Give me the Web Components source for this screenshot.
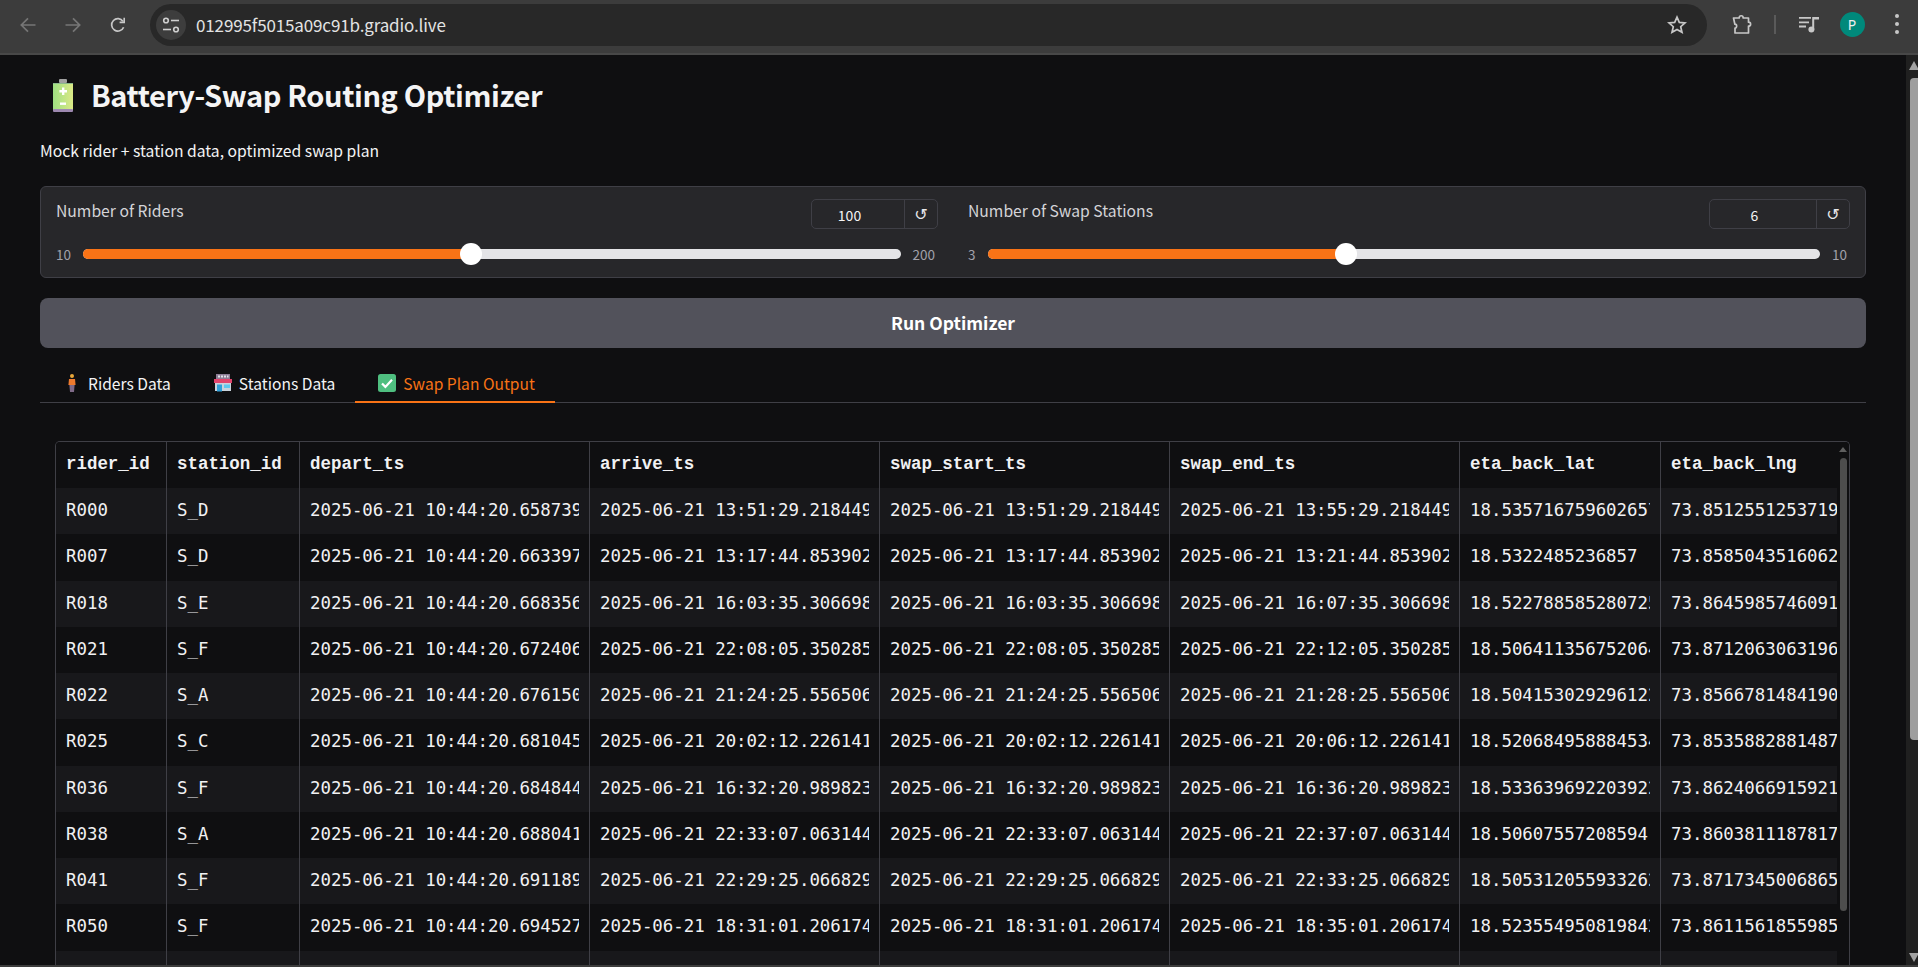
<!DOCTYPE html>
<html lang="en">
<head>
<meta charset="utf-8">
<title>Battery-Swap Routing Optimizer</title>
<style>
html,body{margin:0;height:100%;background:#0f0f11;overflow:hidden}
body{display:flex;flex-direction:column;height:967px;font-family:"Noto Sans CJK JP","Noto Sans",sans-serif;color:#f4f4f5}
</style>
</head>
<body>
<browser-bar url="012995f5015a09c91b.gradio.live" avatar="P"></browser-bar>
<app-viewport>
  <app-heading>Battery-Swap Routing Optimizer</app-heading>
  <app-subtitle>Mock rider + station data, optimized swap plan</app-subtitle>
  <slider-panel>
    <slider-field label="Number of Riders" min="10" max="200" value="100" pct="47.4"></slider-field>
    <slider-field label="Number of Swap Stations" min="3" max="10" value="6" pct="43.03" second></slider-field>
  </slider-panel>
  <run-button>Run Optimizer</run-button>
  <tab-bar></tab-bar>
  <data-table></data-table>
</app-viewport>
<window-edge></window-edge>
<script>
function define(name, css, html, init){
  customElements.define(name, class extends HTMLElement{
    constructor(){super();this.attachShadow({mode:'open'});}
    connectedCallback(){
      if(this.shadowRoot.childElementCount) return;
      const a=k=>this.getAttribute(k);
      this.shadowRoot.innerHTML='<style>'+css+'</style>'+(typeof html==='function'?html(a,this):html);
      if(init) init(this.shadowRoot,a,this);
    }
  });
}

define('browser-bar',`
:host{display:flex;flex:none;height:53px;background:#3c3c3c;border-bottom:2px solid #484848;align-items:center;box-sizing:content-box;position:relative}
svg{display:block;flex:none}
.nav{display:flex;align-items:center;padding:0 0 0 0;margin-top:-3px}
.b{width:45px;display:flex;justify-content:center}
.omni{margin-left:10px;width:1557px;height:42px;margin-top:-3px;border-radius:21px;background:#282828;display:flex;align-items:center;box-sizing:border-box;padding-left:6px}
.tune{width:30px;height:30px;border-radius:50%;background:#3d3d3d;display:flex;align-items:center;justify-content:center;flex:none}
.url{margin-left:10px;font:17px/20px "Noto Sans CJK JP","Noto Sans",sans-serif;color:#e3e3e3;flex:1;letter-spacing:-.14px}
.star{margin-right:20px}
.tools{display:flex;align-items:center;margin-top:-5px}
.ext{margin-left:25px}
.sep{width:2px;height:19px;background:#5a5a5a;margin-left:21px}
.media{margin-left:23px}
.av{width:25px;height:25px;border-radius:50%;background:#00897b;color:#f0f0f0;display:flex;align-items:center;justify-content:center;font:14px/25px "Noto Sans",sans-serif;margin-left:20.5px}
.dots{margin-left:29.5px}
`,(a)=>`
<div class="nav" style="padding-left:5px">
 <div class="b"><svg width="16" height="16" viewBox="0 0 16 16" fill="none" stroke="#767676" stroke-width="1.7"><path d="M15.5 8H1.6M8 1.3 1.3 8 8 14.7"/></svg></div>
 <div class="b"><svg width="16" height="16" viewBox="0 0 16 16" fill="none" stroke="#767676" stroke-width="1.7"><path d="M.5 8h13.9M8 1.3 14.7 8 8 14.7"/></svg></div>
 <div class="b"><svg width="16" height="16" viewBox="0 0 16 16" fill="none" stroke="#c7c7c7" stroke-width="1.7"><path d="M13.6 10.2A6.2 6.2 0 1 1 13 4.4"/><path d="M14.2 .8v4.6H9.6" stroke-width="1.6"/></svg></div>
</div>
<div class="omni">
 <div class="tune"><svg width="18" height="16" viewBox="0 0 18 16" fill="none" stroke="#d0d0d0" stroke-width="1.6"><circle cx="4" cy="3.5" r="2.3"/><path d="M9 3.5h8"/><circle cx="14" cy="12.5" r="2.3"/><path d="M1 12.5h8"/></svg></div>
 <div class="url">${a('url')}</div>
 <svg class="star" width="20" height="20" viewBox="0 0 20 20" fill="none" stroke="#c7c7c7" stroke-width="1.7" stroke-linejoin="miter"><path d="M10 2.2l2.3 5.2 5.7.5-4.3 3.8 1.3 5.6L10 14.4l-5 2.9 1.3-5.6L2 7.9l5.7-.5z"/></svg>
</div>
<div class="tools">
 <svg class="ext" width="21" height="20" viewBox="0 0 21 20" fill="none" stroke="#c7c7c7" stroke-width="1.7" stroke-linejoin="round"><path d="M1.5 4h5.7c0-3 4-3 4 0h5.3v4.2c2.8 0 2.8 3.9 0 3.9v6.9H3v-5c2.2 0 2.2-3.8-.1-3.8z"/></svg>
 <div class="sep"></div>
 <svg class="media" width="20" height="17" viewBox="0 0 20 17" fill="#c7c7c7"><path d="M0 1h12v1.8H0zM0 5.4h10v1.8H0zM0 9.6h7v1.8H0z"/><path d="M13.2 1H20v2.4h-4.8v10h-2z"/><circle cx="12.4" cy="13.4" r="3"/></svg>
 <div class="av">${a('avatar')}</div>
 <svg class="dots" width="6" height="22" viewBox="0 0 6 22" fill="#c7c7c7"><circle cx="3" cy="3" r="2"/><circle cx="3" cy="11" r="2"/><circle cx="3" cy="19" r="2"/></svg>
</div>`);

define('app-viewport',`
:host{display:flex;flex:1;min-height:0;overflow:hidden}
main{flex:1;min-width:0;padding:24px 40px 0;box-sizing:border-box;overflow:hidden}
`,`<main><slot></slot></main><page-scrollbar></page-scrollbar>`);

define('page-scrollbar',`
:host{display:flex;flex:none;flex-direction:column;align-items:flex-end;width:12px;background:#202020}
.up,.dn{width:0;height:0;border-left:5px solid transparent;border-right:5px solid transparent;margin-right:-1px}
.up{border-bottom:9px solid #a3a3a3;margin-top:6px}
.thumb{width:8px;height:662px;background:#9e9e9e;border-radius:4px 0 0 4px;margin-top:8px}
.sp{flex:1}
.dn{border-top:9px solid #a3a3a3;margin-bottom:3px}
`,`<div class="up"></div><div class="thumb"></div><div class="sp"></div><div class="dn"></div>`);

define('window-edge',`:host{display:block;flex:none;height:2px;background:#3c3c3c}`,``);

define('app-heading',`
:host{display:flex;align-items:center;height:33px;gap:18px;padding-left:13px;font-size:29px;font-weight:600;line-height:31px;color:#f4f4f5;letter-spacing:-.38px}
svg{display:block;flex:none}
span{display:block;padding-bottom:2px}
`,`<svg width="20" height="33" viewBox="0 0 20 33"><defs><linearGradient id="g" x1="0" x2="1"><stop offset="0" stop-color="#9fdf82"/><stop offset="1" stop-color="#dbe986"/></linearGradient></defs><rect x="6" width="8" height="4" rx="1" fill="#a1a1a1"/><rect y="4" width="20" height="3" fill="#8cb98a"/><rect y="5" width="20" height="26" fill="url(#g)"/><rect y="30" width="20" height="3" rx="1" fill="#9d88b0"/><path d="M9 8.5h2.4V11H14v2.4h-2.6V16H9v-2.6H6.4V11H9z" fill="#fff"/><rect x="7" y="23.5" width="6" height="2.4" fill="#fff"/></svg><span><slot></slot></span>`);

define('app-subtitle',`:host{display:block;margin-top:28px;font-size:15.7px;line-height:22px;color:#f4f4f5}`,`<slot></slot>`);

define('slider-panel',`
:host{display:flex;margin-top:24px;height:92px;box-sizing:border-box;background:#27272a;border:1px solid #3f3f46;border-radius:6px;padding:12px 15px 0;gap:30px}
`,`<slot></slot>`);

define('slider-field',`
:host{display:block;flex:none;width:882px}
:host([second]){flex:1;width:auto}
.top{display:flex;justify-content:space-between;height:30px}
label{font-size:15.7px;line-height:24px;color:#d4d4d8}
.box{display:flex;width:127px;height:30px;box-sizing:border-box;border:1px solid #3f3f46;border-radius:5px;font-size:14px;color:#f4f4f5}
:host([second]) .box{width:141px}
.val{flex:1;text-align:center;line-height:31px;padding-right:17px}
.rs{width:32px;border-left:1px solid #3f3f46;text-align:center;font:16px/30px "DejaVu Sans",sans-serif;color:#e8e8ea}
.row{display:flex;align-items:center;margin-top:14px;height:22px;font-size:13.5px;color:#a1a1aa}
.min{width:27px}
:host([second]) .min{width:20px}
.track{position:relative;flex:1;height:10px;border-radius:5px;background:#e4e4e7}
.fill{height:10px;border-radius:5px 0 0 5px;background:#f97316}
.thumb{position:absolute;top:-6px;width:22px;height:22px;margin-left:-11px;border-radius:50%;background:#fff}
.max{box-sizing:border-box;width:37px;text-align:right;padding-right:3px}
:host([second]) .max{width:30px}
`,(a)=>`
<div class="top"><label>${a('label')}</label><div class="box"><div class="val">${a('value')}</div><div class="rs">↺</div></div></div>
<div class="row"><div class="min">${a('min')}</div><div class="track"><div class="fill" style="width:${a('pct')}%"></div><div class="thumb" style="left:${a('pct')}%"></div></div><div class="max">${a('max')}</div></div>`);

define('run-button',`
:host{display:flex;align-items:center;justify-content:center;margin-top:20px;height:50px;background:#52525b;border-radius:8px;color:#fff;font-size:17.5px;font-weight:600;line-height:24px}
`,`<slot></slot>`);

define('tab-bar',`
:host{display:flex;margin-top:15px;height:40px;box-sizing:border-box;border-bottom:1px solid #3f3f46;font-size:15.6px;line-height:22px}
.tab{display:flex;align-items:center;height:40px;box-sizing:border-box;padding:0 20px 1px;color:#f4f4f5}
.tab.on{color:#f97316;border-bottom:2px solid #f97316;padding:1px 20px 0}
.i{width:24px;margin-right:4px;display:flex;justify-content:center;flex:none}
svg{display:block}
`,`
<div class="tab"><span class="i"><svg width="8" height="18" viewBox="0 0 8 18"><circle cx="4" cy="2" r="2" fill="#e8a73a"/><path d="M1 5h6l.6 6H.4z" fill="#ee7a2e"/><path d="M1.4 11h5.2L6 18H2z" fill="#7f6a88"/></svg></span>Riders Data</div>
<div class="tab"><span class="i"><svg width="18" height="18" viewBox="0 0 18 18"><rect x="2" y="0" width="14" height="5" fill="#8b7c94"/><path d="M4 1.5h2v2H4zM7 1.5h2v2H7zM10 1.5h2v2h-2zM13 1.5h1.5v2H13z" fill="#e4e4ea"/><rect x="0" y="5" width="18" height="4" fill="#e0446c"/><rect x="1" y="9" width="16" height="8" fill="#c9d3dc"/><rect x="3" y="10.5" width="5" height="7" fill="#2f9fd8"/><rect x="10" y="10.5" width="6" height="3.5" fill="#5fc8ee"/></svg></span>Stations Data</div>
<div class="tab on"><span class="i"><svg width="18" height="18" viewBox="0 0 18 18"><rect width="18" height="18" rx="2.5" fill="#4fbf80"/><path d="M4 9.5l3.4 3.4L14 5.8" fill="none" stroke="#fff" stroke-width="2.2"/></svg></span>Swap Plan Output</div>`);

const cols=['rider_id','station_id','depart_ts','arrive_ts','swap_start_ts','swap_end_ts','eta_back_lat','eta_back_lng'];
const rows=[
['R000','S_D','658739','13:51:29.218449','13:55:29.218449','18.535716759602657','73.8512551253719'],
['R007','S_D','663397','13:17:44.853902','13:21:44.853902','18.5322485236857','73.8585043516062'],
['R018','S_E','668356','16:03:35.306698','16:07:35.306698','18.522788585280725','73.8645985746091'],
['R021','S_F','672406','22:08:05.350285','22:12:05.350285','18.506411356752064','73.8712063063196'],
['R022','S_A','676150','21:24:25.556506','21:28:25.556506','18.504153029296122','73.8566781484190'],
['R025','S_C','681045','20:02:12.226141','20:06:12.226141','18.520684958884534','73.8535882881487'],
['R036','S_F','684844','16:32:20.989823','16:36:20.989823','18.533639692203922','73.8624066915921'],
['R038','S_A','688041','22:33:07.063144','22:37:07.063144','18.50607557208594','73.8603811187817'],
['R041','S_F','691189','22:29:25.066829','22:33:25.066829','18.505312055933262','73.8717345006865'],
['R050','S_F','694527','18:31:01.206174','18:35:01.206174','18.523554950819842','73.8611561855985']
];
const D='2025-06-21 ';
const cell=(t)=>`<div class="c"><span>${t}</span></div>`;
const rowHtml=(cells,cls)=>`<div class="r ${cls}">${cells.map(cell).join('')}</div>`;
define('data-table',`
:host{display:flex;margin:38px 16px 0 15px;height:540px;box-sizing:border-box;border:1px solid #3f3f46;border-bottom:0;border-radius:5px 5px 0 0;overflow:hidden;font:17.4px/24px "DejaVu Sans Mono","Liberation Mono",monospace;color:#f1f1f3}
.body{flex:none;width:1781px;overflow:hidden}
.r{display:grid;grid-template-columns:111px 133px 290px 290px 290px 290px 201px 290px;height:46.25px;background:#0f0f11}
.r.h{height:46px;font:700 17.45px/24px "Liberation Mono","DejaVu Sans Mono",monospace}
.r.o{background:#18181b}
.c{box-sizing:border-box;padding:0 10px 2px;border-right:1px solid #3f3f46;display:flex;align-items:center;min-width:0}
.c span{display:block;overflow:hidden;white-space:nowrap;width:100%}
.bar{flex:1;display:flex;flex-direction:column;align-items:center;background:#0f0f11}
.a{width:0;height:0;border-left:4px solid transparent;border-right:4px solid transparent;border-bottom:5px solid #5f5f5f;margin-top:5px}
.t{width:7px;height:453px;background:#4d4d4d;border-radius:3.5px;margin-top:6px}
`,()=>{
  let h=rowHtml(cols,'h');
  rows.forEach((r,i)=>{
    h+=rowHtml([r[0],r[1],D+'10:44:20.'+r[2],D+r[3],D+r[3],D+r[4],r[5],r[6]],i%2?'':'o');
  });
  h+=rowHtml(['','','','','','','',''],'o');
  return `<div class="body">${h}</div><div class="bar"><div class="a"></div><div class="t"></div></div>`;
});
</script>
</body>
</html>
